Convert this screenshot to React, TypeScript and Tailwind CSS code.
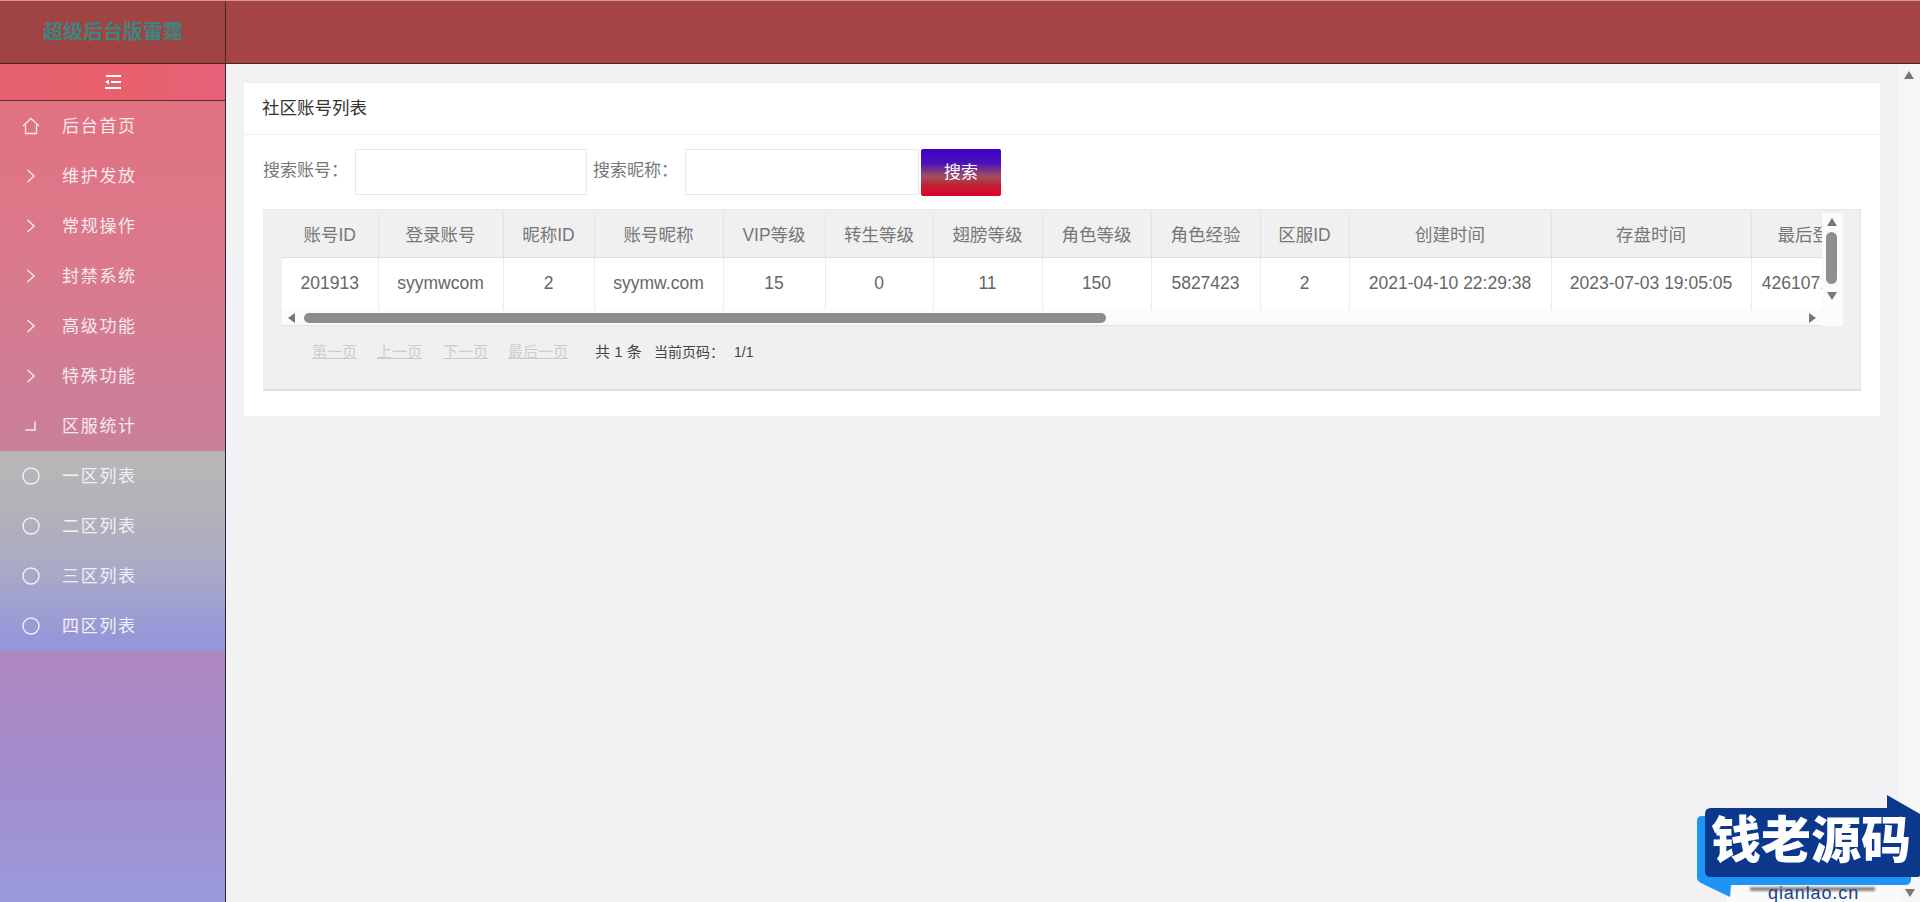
const font = "font-['Liberation_Sans','Noto_Sans_CJK_SC',sans-serif]"

const menu = [
  { icon: 'home', label: '后台首页' },
  { icon: 'right', label: '维护发放' },
  { icon: 'right', label: '常规操作' },
  { icon: 'right', label: '封禁系统' },
  { icon: 'right', label: '高级功能' },
  { icon: 'right', label: '特殊功能' },
  { icon: 'open', label: '区服统计' },
]

const subMenu = ['一区列表', '二区列表', '三区列表', '四区列表']

const columns = [
  { title: '账号ID', value: '201913', width: 'w-[96px]' },
  { title: '登录账号', value: 'syymwcom', width: 'w-[125px]' },
  { title: '昵称ID', value: '2', width: 'w-[91px]' },
  { title: '账号昵称', value: 'syymw.com', width: 'w-[129px]' },
  { title: 'VIP等级', value: '15', width: 'w-[102px]' },
  { title: '转生等级', value: '0', width: 'w-[108px]' },
  { title: '翅膀等级', value: '11', width: 'w-[109px]' },
  { title: '角色等级', value: '150', width: 'w-[109px]' },
  { title: '角色经验', value: '5827423', width: 'w-[109px]' },
  { title: '区服ID', value: '2', width: 'w-[89px]' },
  { title: '创建时间', value: '2021-04-10 22:29:38', width: 'w-[202px]' },
  { title: '存盘时间', value: '2023-07-03 19:05:05', width: 'w-[200px]' },
  { title: '最后登录时间', value: '42610712345678', width: 'w-[158px]' },
]

function MenuIcon({ type }: { type: string }) {
  return (
    <svg width="20" height="20" viewBox="0 0 20 20" fill="none" stroke="currentColor" strokeWidth="1.3" className="shrink-0">
      {type === 'home' && <path d="M2 10 L10 2.5 L18 10 M4.5 8.5 V17.5 H15.5 V8.5" />}
      {type === 'right' && <path d="M6.5 4 L13 10 L6.5 16" strokeWidth="1.5" />}
      {type === 'open' && <path d="M14 5.5 V14 H4.5" strokeWidth="1.5" />}
      {type === 'circle' && <circle cx="10" cy="10" r="8" strokeWidth="1.4" />}
    </svg>
  )
}

function Arrow({ dir }: { dir: 'up' | 'down' | 'left' | 'right' }) {
  const points = {
    up: '0,8 5,0 10,8',
    down: '0,0 10,0 5,8',
    left: '7,0 7,10 0,5',
    right: '0,0 7,5 0,10',
  }[dir]
  const box = dir === 'up' || dir === 'down' ? '0 0 10 8' : '0 0 7 10'
  return (
    <svg viewBox={box} className={dir === 'up' || dir === 'down' ? 'w-[10px] h-[8px]' : 'w-[7px] h-[10px]'} fill="#777">
      <polygon points={points} />
    </svg>
  )
}

function Sidebar() {
  return (
    <aside className="w-[226px] shrink-0 border-r border-[#2b2440] bg-[linear-gradient(180deg,#e3707f_0%,#d97a8c_25%,#c97f9c_47%,#af86c0_70%,#a18ed0_88%,#9a9bdb_100%)]">
      <div className="h-[37px] flex items-center justify-center border-b border-[#5a2a33] bg-[linear-gradient(100deg,#e6616e,#e8606c_60%,#e4627a)]">
        <svg width="18" height="16" viewBox="0 0 18 16" fill="none" stroke="#fff" strokeWidth="2" className="ml-[1px]">
          <path d="M2 2 H17 M7 8 H17 M1 14 H17" />
          <polygon points="1,8 5,5.5 5,10.5" fill="#fff" stroke="none" />
        </svg>
      </div>
      {menu.map((item) => (
        <div key={item.label} className="h-[50px] flex items-center pl-[21px] gap-[21px] text-[#f7e9ec] text-[17px] tracking-[1.7px]">
          <MenuIcon type={item.icon} />
          <span className="pt-[2px]">{item.label}</span>
        </div>
      ))}
      <div className="bg-[linear-gradient(180deg,#b7b7b7_0%,#b4b1b9_30%,#a8a9c8_62%,#9797d8_92%,#9397dc_100%)]">
        {subMenu.map((label) => (
          <div key={label} className="h-[50px] flex items-center pl-[21px] gap-[21px] text-[#f2f0f6] text-[17px] tracking-[1.7px]">
            <MenuIcon type="circle" />
            <span className="pt-[1px]">{label}</span>
          </div>
        ))}
      </div>
    </aside>
  )
}

function DataTable() {
  return (
    <div className="mt-[13px] h-[182px] bg-[#f1f0f1] border-t border-[#e6e6e6] border-b-2 border-b-[#e0e0e0] border-r border-r-[#e4e4e4] pl-[19px] pr-[17px] pt-[3px]">
      <div className="grid grid-cols-[1540px_21px] grid-rows-[97px_16px] w-[1561px]">
        <div className="overflow-hidden">
          <table className="table-fixed w-[1627px] border-collapse">
            <thead>
              <tr className="h-[44px] text-[#777] text-[17.5px] border-b border-[#e2e2e2]">
                {columns.map((col) => (
                  <th key={col.title} className={`${col.width} font-normal border-r border-[#e2e2e2] whitespace-nowrap`}>
                    {col.title}
                  </th>
                ))}
              </tr>
            </thead>
            <tbody>
              <tr className="h-[53px] bg-white text-[#666] text-[17.5px]">
                {columns.map((col) => (
                  <td key={col.title} className="pb-[2px] text-center border-r border-[#ececec] whitespace-nowrap overflow-hidden">
                    {col.value}
                  </td>
                ))}
              </tr>
            </tbody>
          </table>
        </div>
        <div className="row-span-2 bg-[#fbfbfb] flex flex-col items-center pt-[5px] pr-[2px]">
          <Arrow dir="up" />
          <div className="mt-[6px] w-[11px] h-[52px] rounded-[6px] bg-[#8f8f8f]" />
          <div className="mt-[8px]">
            <Arrow dir="down" />
          </div>
        </div>
        <div className="bg-[#fbfbfb] border-b border-[#e2e2e2] flex items-center pl-[6px] pr-[6px]">
          <Arrow dir="left" />
          <div className="ml-[9px] w-[802px] h-[10px] rounded-[5px] bg-[#8c8c8c]" />
          <div className="ml-auto">
            <Arrow dir="right" />
          </div>
        </div>
      </div>
      <div className="mt-[16px] pl-[30px] flex items-center text-[15px] leading-[20px]">
        <span className="text-[#ccc] underline w-[65px]">第一页</span>
        <span className="text-[#ccc] underline w-[66px]">上一页</span>
        <span className="text-[#ccc] underline w-[65px]">下一页</span>
        <span className="text-[#ccc] underline w-[87px]">最后一页</span>
        <span className="text-[#444] text-[15px] w-[59px]">共 1 条</span>
        <span className="text-[#444] text-[14px] w-[80px]">当前页码：</span>
        <span className="text-[#444] text-[14px]">1/1</span>
      </div>
    </div>
  )
}

function Watermark() {
  return (
    <div className="absolute right-0 bottom-0 w-[223px] h-[107px] overflow-hidden">
      <div className="absolute left-[30px] right-[20px] top-[88px] bottom-0 bg-[#fafafa]" />
      <svg viewBox="0 0 223 107" className="absolute inset-0 w-full h-full">
        <path d="M5 21 H214 V84 Q214 90 208 90 H34 L33 102 L4 88 Q0 86 0 82 V26 Q0 21 5 21 Z" fill="#1e94f5" />
        <path d="M14 13 H190 L190 0 L223 19 V80 Q223 82 220 82 H14 Q8 82 8 76 V19 Q8 13 14 13 Z" fill="#0b378c" />
      </svg>
      <div className="absolute left-[53px] right-[45px] top-[92px] h-[4px] bg-[#8a8a8a] blur-[1px]" />
      <div className="absolute left-[14px] top-[11px] text-white text-[50px] leading-[60px] font-black whitespace-nowrap font-['Noto_Sans_CJK_SC',sans-serif]">
        钱老源码
      </div>
      <div className="absolute left-[71px] top-[88px] text-[#1c3f8c] text-[18px] leading-[20px] tracking-[0.9px] whitespace-nowrap font-['Liberation_Sans',sans-serif]">
        qianlao.cn
      </div>
      <div className="absolute right-[5px] bottom-[5px]">
        <Arrow dir="down" />
      </div>
    </div>
  )
}

export default function App() {
  return (
    <div className={`relative h-screen overflow-hidden flex flex-col bg-[#f2f2f4] ${font}`}>
      <header className="h-[64px] shrink-0 flex border-t border-[#d59a8c] border-b border-b-[#4a2226] bg-[#a64545]">
        <div className="w-[226px] shrink-0 flex items-center justify-center border-r border-[#4a2226] bg-[#a04343]">
          <span className="text-[20px] font-bold text-[#3f8380] ml-[1px]">超级后台版雷霆</span>
        </div>
      </header>
      <div className="flex flex-1 min-h-0">
        <Sidebar />
        <main className="flex-1 min-w-0 flex">
          <div className="flex-1 min-w-0 pt-[19px] pl-[18px] pr-[18px]">
            <section className="bg-white h-[333px] shadow-[0_0_4px_rgba(0,0,0,0.02)]">
              <div className="h-[52px] px-[18px] flex items-center border-b border-[#f0f0f0] text-[#333] text-[17.5px]">
                社区账号列表
              </div>
              <div className="px-[19px] pb-[26px]">
                <div className="pt-[14px] flex items-start text-[#777] text-[17px]">
                  <label className="w-[92px] leading-[44px]">搜索账号：</label>
                  <input className="w-[232px] h-[46px] border border-[#e8e8e8] bg-white" />
                  <label className="ml-[6px] w-[92px] leading-[44px]">搜索昵称：</label>
                  <input className="w-[234px] h-[46px] border border-[#e8e8e8] bg-white" />
                  <button className="ml-[2px] w-[80px] h-[47px] rounded-[2px] text-white text-[17px] bg-[linear-gradient(180deg,#3a00c8_0%,#4a10b8_30%,#a05060_58%,#c02030_78%,#e00030_100%)]">
                    搜索
                  </button>
                </div>
                <DataTable />
              </div>
            </section>
          </div>
          <div className="w-[22px] shrink-0 bg-[#f6f6f7] flex justify-center pt-[7px]">
            <Arrow dir="up" />
          </div>
        </main>
      </div>
      <Watermark />
    </div>
  )
}
